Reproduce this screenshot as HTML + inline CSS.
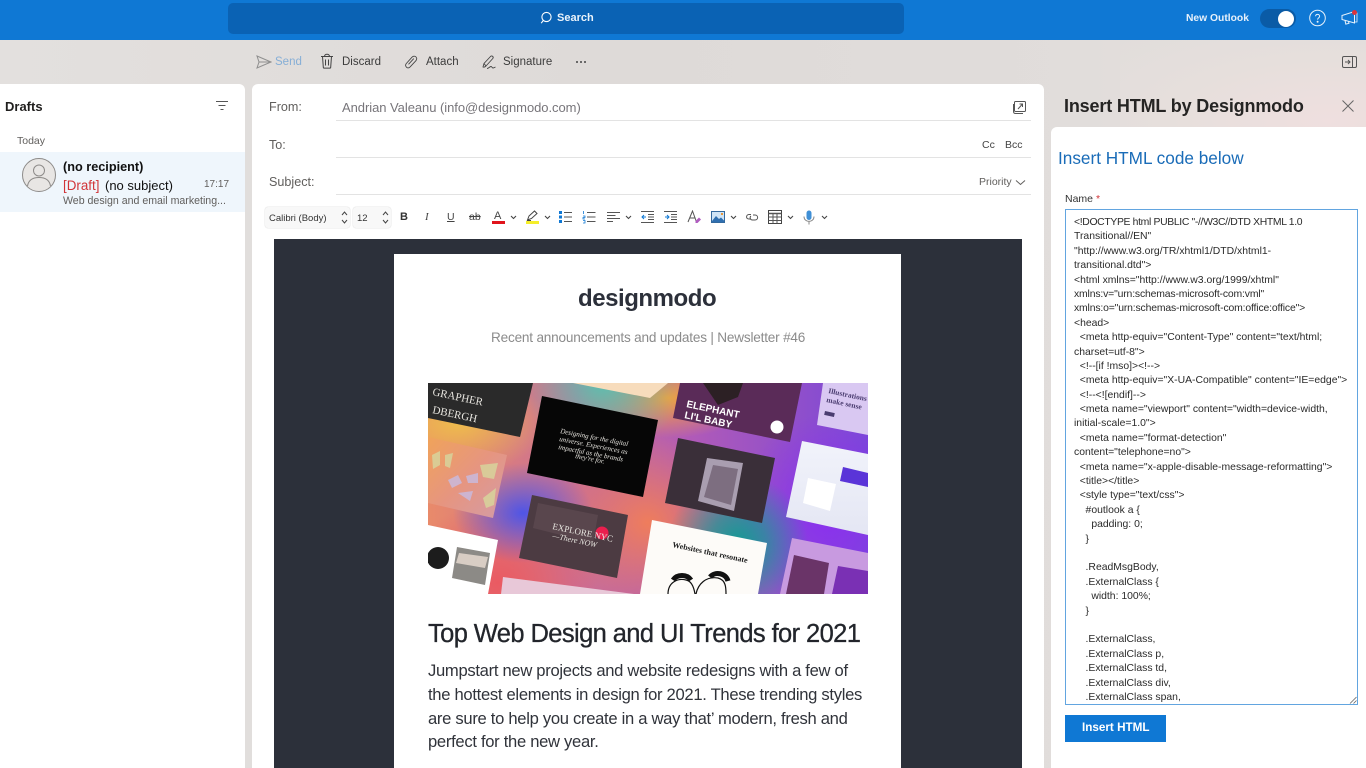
<!DOCTYPE html>
<html lang="en"><head><meta charset="utf-8"><title>Outlook - Insert HTML by Designmodo</title>
<style>
html,body{margin:0;padding:0;width:1366px;height:768px;overflow:hidden;background:#e4e0de;font-family:"Liberation Sans",sans-serif;color:#252423}
div,span,svg{position:absolute}
.t{white-space:nowrap;line-height:1}
span.i,pre span{position:static}
pre{margin:0;position:absolute;font:10.4px/14.39px "Liberation Sans",sans-serif;color:#2a2a2a;white-space:pre}
</style></head><body>

<div style="left:0;top:40px;width:1366px;height:728px;background:linear-gradient(90deg,#e3e0de 0,#dedad8 45%,#e1dddb 80%,#ecdcdc 100%)"></div>
<div style="left:1120px;top:40px;width:246px;height:90px;background:radial-gradient(ellipse at 85% 90%,#efdfdf 0,#e6dfdc 55%,#e1dddb 100%)"></div>

<!-- Top bar -->
<div style="left:0;top:0;width:1366px;height:40px;background:#0f78d4"></div>
<div style="left:228px;top:3px;width:676px;height:31px;background:#0a62b4;border-radius:5px"></div>
<svg style="left:540px;top:11px" width="15" height="15" viewBox="0 0 15 15" fill="none" stroke="#fff" stroke-width="1.1"><circle cx="6.5" cy="6" r="4.6"/><path d="M3.4 9.4 1.2 12.2"/></svg>
<div class="t" style="left:557px;top:13px;font-size:11px;font-weight:bold;color:#eaf3fb">Search</div>
<div class="t" style="left:1186px;top:13.500px;font-size:10.300px;font-weight:bold;color:#e6f0fa">New Outlook</div>
<div style="left:1260px;top:9px;width:36px;height:19px;border-radius:10px;background:#0a5ba6"></div>
<div style="left:1278px;top:10.5px;width:16px;height:16px;border-radius:50%;background:#fff"></div>
<svg style="left:1308px;top:9px" width="19" height="19" viewBox="0 0 19 19" fill="none" stroke="#e8f2fb"><circle cx="9.5" cy="9" r="7.8"/><path d="M7.6 7.3c0-2.5 4-2.5 4 0 0 1.6-2 1.6-2 3.3" stroke-width="1"/><circle cx="9.6" cy="12.7" r=".5" fill="#e8f2fb"/></svg>
<svg style="left:1341px;top:10px" width="18" height="16" viewBox="0 0 18 16" fill="none" stroke="#e8f2fb"><path d="M1 5.5 13.5 1.5V13L1 9.5ZM4 10.5l.8 3.6 3.2-.8-.6-2"/><path d="M13.5 3H16V12H13.5" stroke-width=".8"/></svg>
<div style="left:1352px;top:10px;width:5px;height:5px;border-radius:50%;background:#d9343c"></div>

<!-- Command bar -->
<svg style="left:256px;top:54px" width="16" height="16" viewBox="0 0 16 16" fill="none" stroke="#8f8f8f"><path d="M1 2 15 8 1 14 3 8ZM3 8H15"/></svg>
<div class="t" style="left:275px;top:57px;font-size:11.5px;color:#86aed6">Send</div>
<svg style="left:320px;top:53px" width="14" height="16" viewBox="0 0 14 16" fill="none" stroke="#444"><path d="M1 3.5H13M4.5 3.500c0-3 5-3 5 0M2.500 3.500 3.300 14.200c0 .6.500.9 1 .9H9.700c.5 0 1-.3 1-.9L11.500 3.500M5.500 6.500V12.500M8.500 6.500V12.500"/></svg>
<div class="t" style="left:342px;top:57px;font-size:11.5px;color:#3c3c3c">Discard</div>
<svg style="left:404px;top:55px" width="14" height="14" viewBox="0 0 14 14" fill="none" stroke="#444" stroke-width=".9"><path d="M3 12.600C1.400 11.500 1.200 10 2.200 8.600L8 2.200C9.300 .9 11 .9 12 2 13 3.100 12.800 4.600 11.800 5.800L6.200 11.800C5 13 4 13.200 3 12.600ZM4.500 9.300 9.800 3.600"/></svg>
<div class="t" style="left:426px;top:57px;font-size:11.500px;color:#3c3c3c">Attach</div>
<svg style="left:481px;top:54px" width="16" height="16" viewBox="0 0 16 16" fill="none" stroke="#444" stroke-width=".9"><path d="M2 13 3 9.500 9.500 2.500C11 1 13 3 11.800 4.500L5 12C4 13 3 13.500 2 13ZM3 9.500 5 12M6 14.500C8 14.500 8.500 12.500 10 12.500 11 12.500 11 14 12 14 13 14 13.500 13.500 14.500 13"/></svg>
<div class="t" style="left:503px;top:57px;font-size:11.500px;color:#3c3c3c">Signature</div>
<div style="left:576px;top:61px;width:2px;height:2px;background:#444;border-radius:50%;box-shadow:4px 0 #444,8px 0 #444"></div>
<svg style="left:1342px;top:56px" width="15" height="12" viewBox="0 0 15 12" fill="none" stroke="#555"><rect x=".5" y=".5" width="14" height="11" rx="1.500"/><path d="M10.500 .5V11.500M3 6H8M6 4 8 6 6 8"/></svg>

<!-- Left panel -->
<div style="left:0;top:84px;width:245px;height:684px;background:#fff;border-radius:0 6px 0 0"></div>
<div class="t" style="left:5px;top:100px;font-size:13px;font-weight:bold;color:#201f1e">Drafts</div>
<svg style="left:215px;top:100px" width="14" height="11" viewBox="0 0 14 11" fill="none" stroke="#555"><path d="M1 1.500H13M3.500 5.500H10.500M5.500 9.500H8.500"/></svg>
<div class="t" style="left:17px;top:136px;font-size:10.500px;color:#605e5c">Today</div>
<div style="left:0;top:152px;width:245px;height:60px;background:#eff6fc"></div>
<svg style="left:22px;top:158px" width="34" height="34" viewBox="0 0 34 34"><circle cx="17" cy="17" r="16.500" fill="#e8e6e4" stroke="#8d8b89"/><g fill="none" stroke="#8d8b89"><circle cx="17" cy="12.500" r="5.500"/><path d="M5.500 28c1-6 5-8.500 11.500-8.500S27.500 22 28.500 28"/></g></svg>
<div class="t" style="left:63px;top:160.500px;font-size:12.700px;font-weight:bold;color:#111">(no recipient)</div>
<div class="t" style="left:63px;top:178.500px;font-size:13.400px;color:#d13438">[Draft]</div>
<div class="t" style="left:105px;top:178.500px;font-size:13px;color:#111">(no subject)</div>
<div class="t" style="left:204px;top:179.500px;font-size:10px;color:#605e5c">17:17</div>
<div class="t" style="left:63px;top:196px;font-size:10.600px;color:#605e5c">Web design and email marketing...</div>

<!-- Compose -->
<div style="left:252px;top:84px;width:792px;height:684px;background:#fff;border-radius:6px 6px 0 0"></div>
<div class="t" style="left:269px;top:101px;font-size:12.600px;color:#605e5c">From:</div>
<div class="t" style="left:342px;top:101px;font-size:13px;letter-spacing:-.05px;color:#77757a">Andrian Valeanu (info@designmodo.com)</div>
<div style="left:336px;top:120px;width:695px;height:1px;background:#e3e3e3"></div>
<svg style="left:1013px;top:101px" width="13" height="13" viewBox="0 0 13 13" fill="none" stroke="#555"><path d="M2.500.5H11.500C12 .5 12.500 1 12.500 1.500V9.500C12.500 10 12 10.500 11.500 10.500H2.500C2 10.500 1.500 10 1.500 9.500V1.500C1.500 1 2 .5 2.500 .5ZM.5 3V10.500C.5 11.800 1.200 12.500 2.500 12.500H10M5 8 9.500 3M6.500 3H9.500V6"/></svg>
<div class="t" style="left:269px;top:139px;font-size:12.600px;color:#605e5c">To:</div>
<div class="t" style="left:982px;top:140px;font-size:10.500px;color:#444">Cc</div>
<div class="t" style="left:1005px;top:140px;font-size:10.500px;color:#444">Bcc</div>
<div style="left:336px;top:157px;width:695px;height:1px;background:#e3e3e3"></div>
<div class="t" style="left:269px;top:176px;font-size:12.600px;color:#605e5c">Subject:</div>
<div class="t" style="left:979px;top:177px;font-size:10.500px;color:#605e5c">Priority</div>
<svg style="left:1015px;top:179px" width="11" height="7" viewBox="0 0 11 7" fill="none" stroke="#605e5c"><path d="M1 1.500 5.500 5.500 10 1.500"/></svg>
<div style="left:336px;top:194px;width:695px;height:1px;background:#e3e3e3"></div>

<!-- Format toolbar -->
<div style="left:265px;top:207px;width:85px;height:21px;background:#f8f8f8;border-radius:3px;box-shadow:0 0 1px #bbb"></div>
<div class="t" style="left:269px;top:213.500px;font-size:9.500px;color:#333">Calibri (Body)</div>
<svg style="left:341px;top:210px" width="7" height="15" viewBox="0 0 7 15" fill="none" stroke="#444"><path d="M1 5 3.500 2 6 5M1 10 3.500 13 6 10"/></svg>
<div style="left:353px;top:207px;width:38px;height:21px;background:#f8f8f8;border-radius:3px;box-shadow:0 0 1px #bbb"></div>
<div class="t" style="left:357px;top:213.500px;font-size:9.500px;color:#333">12</div>
<svg style="left:382px;top:210px" width="7" height="15" viewBox="0 0 7 15" fill="none" stroke="#444"><path d="M1 5 3.500 2 6 5M1 10 3.500 13 6 10"/></svg>
<div class="t" style="left:400px;top:212px;font-size:11px;font-weight:bold;color:#333">B</div>
<div class="t" style="left:425px;top:212px;font-size:11px;font-style:italic;font-family:'Liberation Serif',serif;color:#444">I</div>
<div class="t" style="left:447px;top:212px;font-size:10.500px;color:#444;text-decoration:underline">U</div>
<div class="t" style="left:469px;top:212px;font-size:10.500px;color:#444;text-decoration:line-through">ab</div>
<div class="t" style="left:494px;top:211px;font-size:11px;color:#444">A</div>
<div style="left:492px;top:221px;width:13px;height:3px;background:#e0141c"></div>
<svg style="left:510px;top:215px" width="7" height="5" viewBox="0 0 7 5" fill="none" stroke="#444" stroke-width="1.100"><path d="M1 1 3.500 3.500 6 1"/></svg>
<svg style="left:526px;top:210px" width="13" height="11" viewBox="0 0 13 11" fill="none" stroke="#444"><path d="M1.500 10 3 6 8.500 1 11 3.500 5.500 8.500ZM1 10.500H5"/></svg>
<div style="left:526px;top:221px;width:13px;height:3px;background:#f5ee2b"></div>
<svg style="left:544px;top:215px" width="7" height="5" viewBox="0 0 7 5" fill="none" stroke="#444" stroke-width="1.100"><path d="M1 1 3.500 3.500 6 1"/></svg>
<svg style="left:559px;top:210px" width="14" height="14" viewBox="0 0 14 14"><g fill="#0f78d4"><rect y="1" width="3" height="3"/><rect y="5.500" width="3" height="3"/><rect y="10" width="3" height="3"/></g><path d="M5 2.500H13M5 7H13M5 11.500H13" stroke="#555"/></svg>
<svg style="left:582px;top:210px" width="14" height="14" viewBox="0 0 14 14"><path d="M1.500 1V4M1 6H3V7.500H1V9H3M1 10.500H3V13H1" stroke="#0f78d4" fill="none" stroke-width=".8"/><path d="M5 2.500H13.500M5 7H13.500M5 11.500H13.500" stroke="#555"/></svg>
<svg style="left:607px;top:211px" width="14" height="12" viewBox="0 0 14 12" fill="none" stroke="#555"><path d="M0 1.500H13M0 4.500H8.500M0 7.500H13M0 10.500H6"/></svg>
<svg style="left:625px;top:215px" width="7" height="5" viewBox="0 0 7 5" fill="none" stroke="#444" stroke-width="1.100"><path d="M1 1 3.500 3.500 6 1"/></svg>
<svg style="left:641px;top:211px" width="13" height="12" viewBox="0 0 13 12" fill="none" stroke="#555"><path d="M0 .5H13M7 3.500H13M7 6H13M7 8.500H13M0 11.500H13"/><path d="M5 6H1M3 4 1 6 3 8" stroke="#0f78d4"/></svg>
<svg style="left:664px;top:211px" width="13" height="12" viewBox="0 0 13 12" fill="none" stroke="#555"><path d="M0 .5H13M7 3.500H13M7 6H13M7 8.500H13M0 11.500H13"/><path d="M1 6H5M3 4 5 6 3 8" stroke="#0f78d4"/></svg>
<svg style="left:687px;top:210px" width="15" height="14" viewBox="0 0 15 14" fill="none"><path d="M1 12 5.500 1 9.500 12M2.500 8H8.500" stroke="#555"/><path d="M8.500 11 12 7.500 14 9.500 10.500 13H8.500Z" fill="#b05cc0"/></svg>
<svg style="left:711px;top:211px" width="14" height="12" viewBox="0 0 14 12"><rect x=".5" y=".5" width="13" height="11" fill="#cfe4f6" stroke="#33699e"/><path d="M1 10 5 5 8 8 10 6.500 13 9.500V11H1Z" fill="#2f6fb0"/><rect x="10" y="2" width="2" height="2" fill="#e8973a"/></svg>
<svg style="left:730px;top:215px" width="7" height="5" viewBox="0 0 7 5" fill="none" stroke="#444" stroke-width="1.100"><path d="M1 1 3.500 3.500 6 1"/></svg>
<svg style="left:745px;top:212px" width="14" height="10" viewBox="0 0 14 10" fill="none" stroke="#555"><path d="M6 2.500H4C1 2.500 0.500 7 4 7H5.500"/><path d="M8 3H10C13.500 3 13.500 8 10 8H7.500C5 8 4.500 5 6 4"/></svg>
<svg style="left:768px;top:210px" width="14" height="14" viewBox="0 0 14 14" fill="none" stroke="#555"><rect x=".5" y=".5" width="13" height="13" stroke="#444"/><path d="M.5 3.500H13.500" stroke-width="1.500"/><path d="M.5 7H13.500M.5 10.500H13.500M5 3V13.500M9 3V13.500"/></svg>
<svg style="left:787px;top:215px" width="7" height="5" viewBox="0 0 7 5" fill="none" stroke="#444" stroke-width="1.100"><path d="M1 1 3.500 3.500 6 1"/></svg>
<svg style="left:803px;top:210px" width="12" height="15" viewBox="0 0 12 15" fill="none"><rect x="3.500" y="0.500" width="5" height="9.500" rx="2.500" fill="#3f8fd6"/><path d="M1 6.500C1 13 11 13 11 6.500M6 11.500V14.500" stroke="#888"/></svg>
<svg style="left:821px;top:215px" width="7" height="5" viewBox="0 0 7 5" fill="none" stroke="#444" stroke-width="1.100"><path d="M1 1 3.500 3.500 6 1"/></svg>

<!-- Newsletter -->
<div style="left:274px;top:239px;width:748px;height:529px;background:#2c303a"></div>
<div style="left:394px;top:254px;width:507px;height:514px;background:#fff"></div>
<div class="t" style="left:578px;top:287px;font-size:24px;font-weight:bold;letter-spacing:-.45px;color:#2c303a">designmodo</div>
<div class="t" style="left:491px;top:331px;font-size:13.600px;letter-spacing:-.2px;color:#8b8b8b">Recent announcements and updates | Newsletter #46</div>

<div style="left:428px;top:383px;width:440px;height:211px;overflow:hidden;background:
radial-gradient(ellipse 70px 50px at 95px 130px,#4f55e6 0,rgba(79,85,230,0) 100%),
radial-gradient(ellipse 70px 70px at 310px 160px,#159a94 0,rgba(21,154,148,.7) 40%,rgba(21,154,148,0) 100%),
radial-gradient(ellipse 90px 100px at 400px 130px,#8a2ff0 0,rgba(138,47,240,0) 100%),
radial-gradient(ellipse 80px 70px at 175px 0,#5bc0b0 0,rgba(91,192,176,0) 100%),
radial-gradient(ellipse 90px 50px at 30px 40px,#eebc4c 0,rgba(238,188,76,0) 100%),
radial-gradient(ellipse 90px 40px at 240px 15px,#f5a03c 0,rgba(245,160,60,0) 100%),
radial-gradient(ellipse 100px 80px at 70px 200px,#ea5a62 0,rgba(234,90,98,0) 100%),
radial-gradient(ellipse 100px 90px at 220px 140px,#ef7d5c 0,rgba(239,125,92,0) 100%),
linear-gradient(90deg,#e98a6a,#b05ab8 60%,#7a48d8)"></div>
<svg style="left:428px;top:383px;overflow:hidden;filter:blur(.35px)" width="440" height="211" viewBox="0 0 440 211">
<defs>
<linearGradient id="g3d" x1="0" y1="0" x2="1" y2="1"><stop offset="0" stop-color="#f0a35a"/><stop offset=".5" stop-color="#e69580"/><stop offset="1" stop-color="#d39ca8"/></linearGradient>
<linearGradient id="gapp" x1="0" y1="0" x2="0" y2="1"><stop offset="0" stop-color="#f1f3fb"/><stop offset="1" stop-color="#e4e6f3"/></linearGradient>
</defs>
<polygon points="0,0 105,0 92,54 0,35" fill="#2a2a2a"/>
<polygon points="145,0 240,0 222,15" fill="#f7dcbc"/>
<polygon points="114,13 230,37 215,114 99,90" fill="#060606"/>
<polygon points="0,54 79,72 65,135 0,120" fill="url(#g3d)"/>
<g fill="#d8d49c" opacity=".85"><polygon points="4,72 12,68 12,82 5,86"/><polygon points="17,72 25,70 22,85 17,83"/><polygon points="52,82 70,80 66,96 55,94"/><polygon points="55,115 68,105 66,122 58,125"/></g>
<g fill="#c8bce2" opacity=".8"><polygon points="20,97 30,92 34,100 24,105"/><polygon points="38,93 50,90 50,100 40,100"/><polygon points="30,110 45,108 42,118"/></g>
<polygon points="104,112 200,132 189,195 91,175" fill="#4c3b42"/>
<polygon points="110,120 170,132 165,160 105,145" fill="#5c4a50" opacity=".8"/>
<circle cx="174" cy="150" r="6.500" fill="#ea1f4e"/>
<polygon points="0,142 70,157 60,211 0,211" fill="#fff"/>
<circle cx="10" cy="175" r="11" fill="#1c1c1c"/>
<polygon points="29,164 62,170 57,202 24,195" fill="#8c8a86"/>
<polygon points="31,170 60,174 57,185 28,180" fill="#d8cdc4"/>
<polygon points="75,194 206,211 73,211" fill="#e8c8d8"/>
<polygon points="252,0 374,0 362,59 245,35" fill="#5a2b58"/>
<polygon points="275,0 315,0 310,14 290,22" fill="#2c2024"/>
<circle cx="349" cy="44" r="6.500" fill="#fff"/>
<polygon points="250,55 347,75 334,140 237,120" fill="#3a2f39"/>
<polygon points="279,75 315,80 306,128 270,118" fill="#a99eb0"/>
<polygon points="285,82 310,86 303,122 276,114" fill="#7d6e80"/>
<polygon points="374,58 440,71 440,152 358,134" fill="url(#gapp)"/>
<polygon points="415,84 440,90 440,104 412,98" fill="#5a34d8"/>
<polygon points="380,95 408,101 402,128 375,120" fill="#fff"/>
<polygon points="395,0 440,0 440,52 389,42" fill="#d9c8f2"/>
<polygon points="224,137 339,160 330,211 212,211" fill="#fdfbf8"/>
<polygon points="364,155 440,170 440,211 352,211" fill="#c89ae0"/>
<polygon points="366,172 401,180 396,211 358,211" fill="#6a3468"/>
<polygon points="410,183 440,188 440,211 404,211" fill="#7a30b4"/>
<g font-family="Liberation Serif,serif" fill="#e8e6e0">
<text x="4" y="12" font-size="11" transform="rotate(12 4 12)">GRAPHER</text>
<text x="4" y="30" font-size="11" transform="rotate(12 4 30)">DBERGH</text>
<text x="132" y="50" font-size="7" font-style="italic" transform="rotate(11 132 50)">Designing for the digital</text>
<text x="131" y="58" font-size="7" font-style="italic" transform="rotate(11 131 58)">universe. Experiences as</text>
<text x="130" y="66" font-size="7" font-style="italic" transform="rotate(11 130 66)">impactful as the brands</text>
<text x="147" y="75" font-size="7" font-style="italic" transform="rotate(11 147 75)">they're for.</text>
<text x="124" y="146" font-size="9" transform="rotate(12 124 146)">EXPLORE NYC</text>
<text x="124" y="155" font-size="8" font-style="italic" transform="rotate(12 124 155)">—There NOW</text>
</g>
<text x="258" y="24" font-family="Liberation Sans,sans-serif" font-size="10" font-weight="bold" fill="#fff" transform="rotate(12 258 24)">ELEPHANT</text>
<text x="256" y="35" font-family="Liberation Sans,sans-serif" font-size="10" font-weight="bold" fill="#fff" transform="rotate(12 256 35)">LI'L BABY</text>
<text x="244" y="164" font-family="Liberation Serif,serif" font-size="8" font-weight="bold" fill="#222" transform="rotate(12 244 164)">Websites that resonate</text>
<g fill="none" stroke="#111" stroke-width="1.200"><path d="M240 211c0-12 10-16 18-14 6 1 8 8 9 14M268 211c2-10 10-18 22-16 8 2 8 10 8 16"/></g>
<path d="M245 197c4-6 14-6 18 0M282 194c5-6 16-4 18 4" stroke="#111" stroke-width="5" fill="none"/>
<text x="400" y="10" font-family="Liberation Serif,serif" font-size="7.500" font-weight="bold" fill="#4a3c70" transform="rotate(12 400 10)">Illustrations that</text>
<text x="398" y="19" font-family="Liberation Serif,serif" font-size="7.500" font-weight="bold" fill="#4a3c70" transform="rotate(12 398 19)">make sense</text>
<rect x="397" y="28" width="10" height="4" fill="#4a3c70" transform="rotate(12 397 28)"/>
</svg>

<div class="t" style="left:428px;top:621.500px;font-size:25.500px;letter-spacing:-.6px;color:#22252b;-webkit-text-stroke:.3px #22252b">Top Web Design and UI Trends for 2021</div>
<div class="t" style="left:428px;top:663px;font-size:16.600px;letter-spacing:-.3px;color:#30333a">Jumpstart new projects and website redesigns with a few of</div>
<div class="t" style="left:428px;top:687px;font-size:16.600px;letter-spacing:-.3px;color:#30333a">the hottest elements in design for 2021. These trending styles</div>
<div class="t" style="left:428px;top:710.500px;font-size:16.600px;letter-spacing:-.3px;color:#30333a">are sure to help you create in a way that’ modern, fresh and</div>
<div class="t" style="left:428px;top:734px;font-size:16.600px;letter-spacing:-.3px;color:#30333a">perfect for the new year.</div>

<!-- Right panel -->
<div class="t" style="left:1064px;top:97px;font-size:18px;font-weight:bold;letter-spacing:-.16px;color:#252423">Insert HTML by Designmodo</div>
<svg style="left:1342px;top:100px" width="12" height="12" viewBox="0 0 12 12" fill="none" stroke="#666"><path d="M.5 .5 11.500 11.500M11.500 .5 .5 11.500"/></svg>
<div style="left:1051px;top:127px;width:315px;height:641px;background:#fff;border-radius:6px 0 0 0"></div>
<div class="t" style="left:1058px;top:150px;font-size:17.200px;color:#1a6cb8">Insert HTML code below</div>
<div class="t" style="left:1065px;top:194px;font-size:10.500px;color:#333">Name <span class="i" style="color:#d13438">*</span></div>
<div style="left:1065px;top:209px;width:291px;height:494px;border:1px solid #62a5e0"></div>
<div style="left:1066px;top:210px;width:291px;height:494px;overflow:hidden"><pre style="left:8px;top:6px"><span style="letter-spacing:-.34px">&lt;!DOCTYPE html PUBLIC "-//W3C//DTD XHTML 1.0</span>
Transitional//EN"
"http://www.w3.org/TR/xhtml1/DTD/xhtml1-
transitional.dtd"&gt;
&lt;html xmlns="http://www.w3.org/1999/xhtml"
<span style="letter-spacing:-.15px">xmlns:v="urn:schemas-microsoft-com:vml"</span>
<span style="letter-spacing:-.15px">xmlns:o="urn:schemas-microsoft-com:office:office"&gt;</span>
&lt;head&gt;
  &lt;meta http-equiv="Content-Type" content="text/html;
charset=utf-8"&gt;
  &lt;!--[if !mso]&gt;&lt;!--&gt;
  &lt;meta http-equiv="X-UA-Compatible" content="IE=edge"&gt;
  &lt;!--&lt;![endif]--&gt;
  &lt;meta name="viewport" content="width=device-width,
initial-scale=1.0"&gt;
  &lt;meta name="format-detection"
content="telephone=no"&gt;
  &lt;meta name="x-apple-disable-message-reformatting"&gt;
  &lt;title&gt;&lt;/title&gt;
  &lt;style type="text/css"&gt;
    #outlook a {
      padding: 0;
    }

    .ReadMsgBody,
    .ExternalClass {
      width: 100%;
    }

    .ExternalClass,
    .ExternalClass p,
    .ExternalClass td,
    .ExternalClass div,
    .ExternalClass span,
    .ExternalClass font,</pre></div>
<svg style="left:1349px;top:696px" width="8" height="8" viewBox="0 0 8 8" fill="none" stroke="#666" stroke-width=".8"><path d="M1 7.500 7.500 1M4.500 7.500 7.500 4.500"/></svg>
<div style="left:1065px;top:715px;width:101px;height:27px;background:#0f78d4"></div>
<div class="t" style="left:1082px;top:722px;font-size:11.700px;font-weight:bold;color:#fff">Insert HTML</div>
</body></html>
